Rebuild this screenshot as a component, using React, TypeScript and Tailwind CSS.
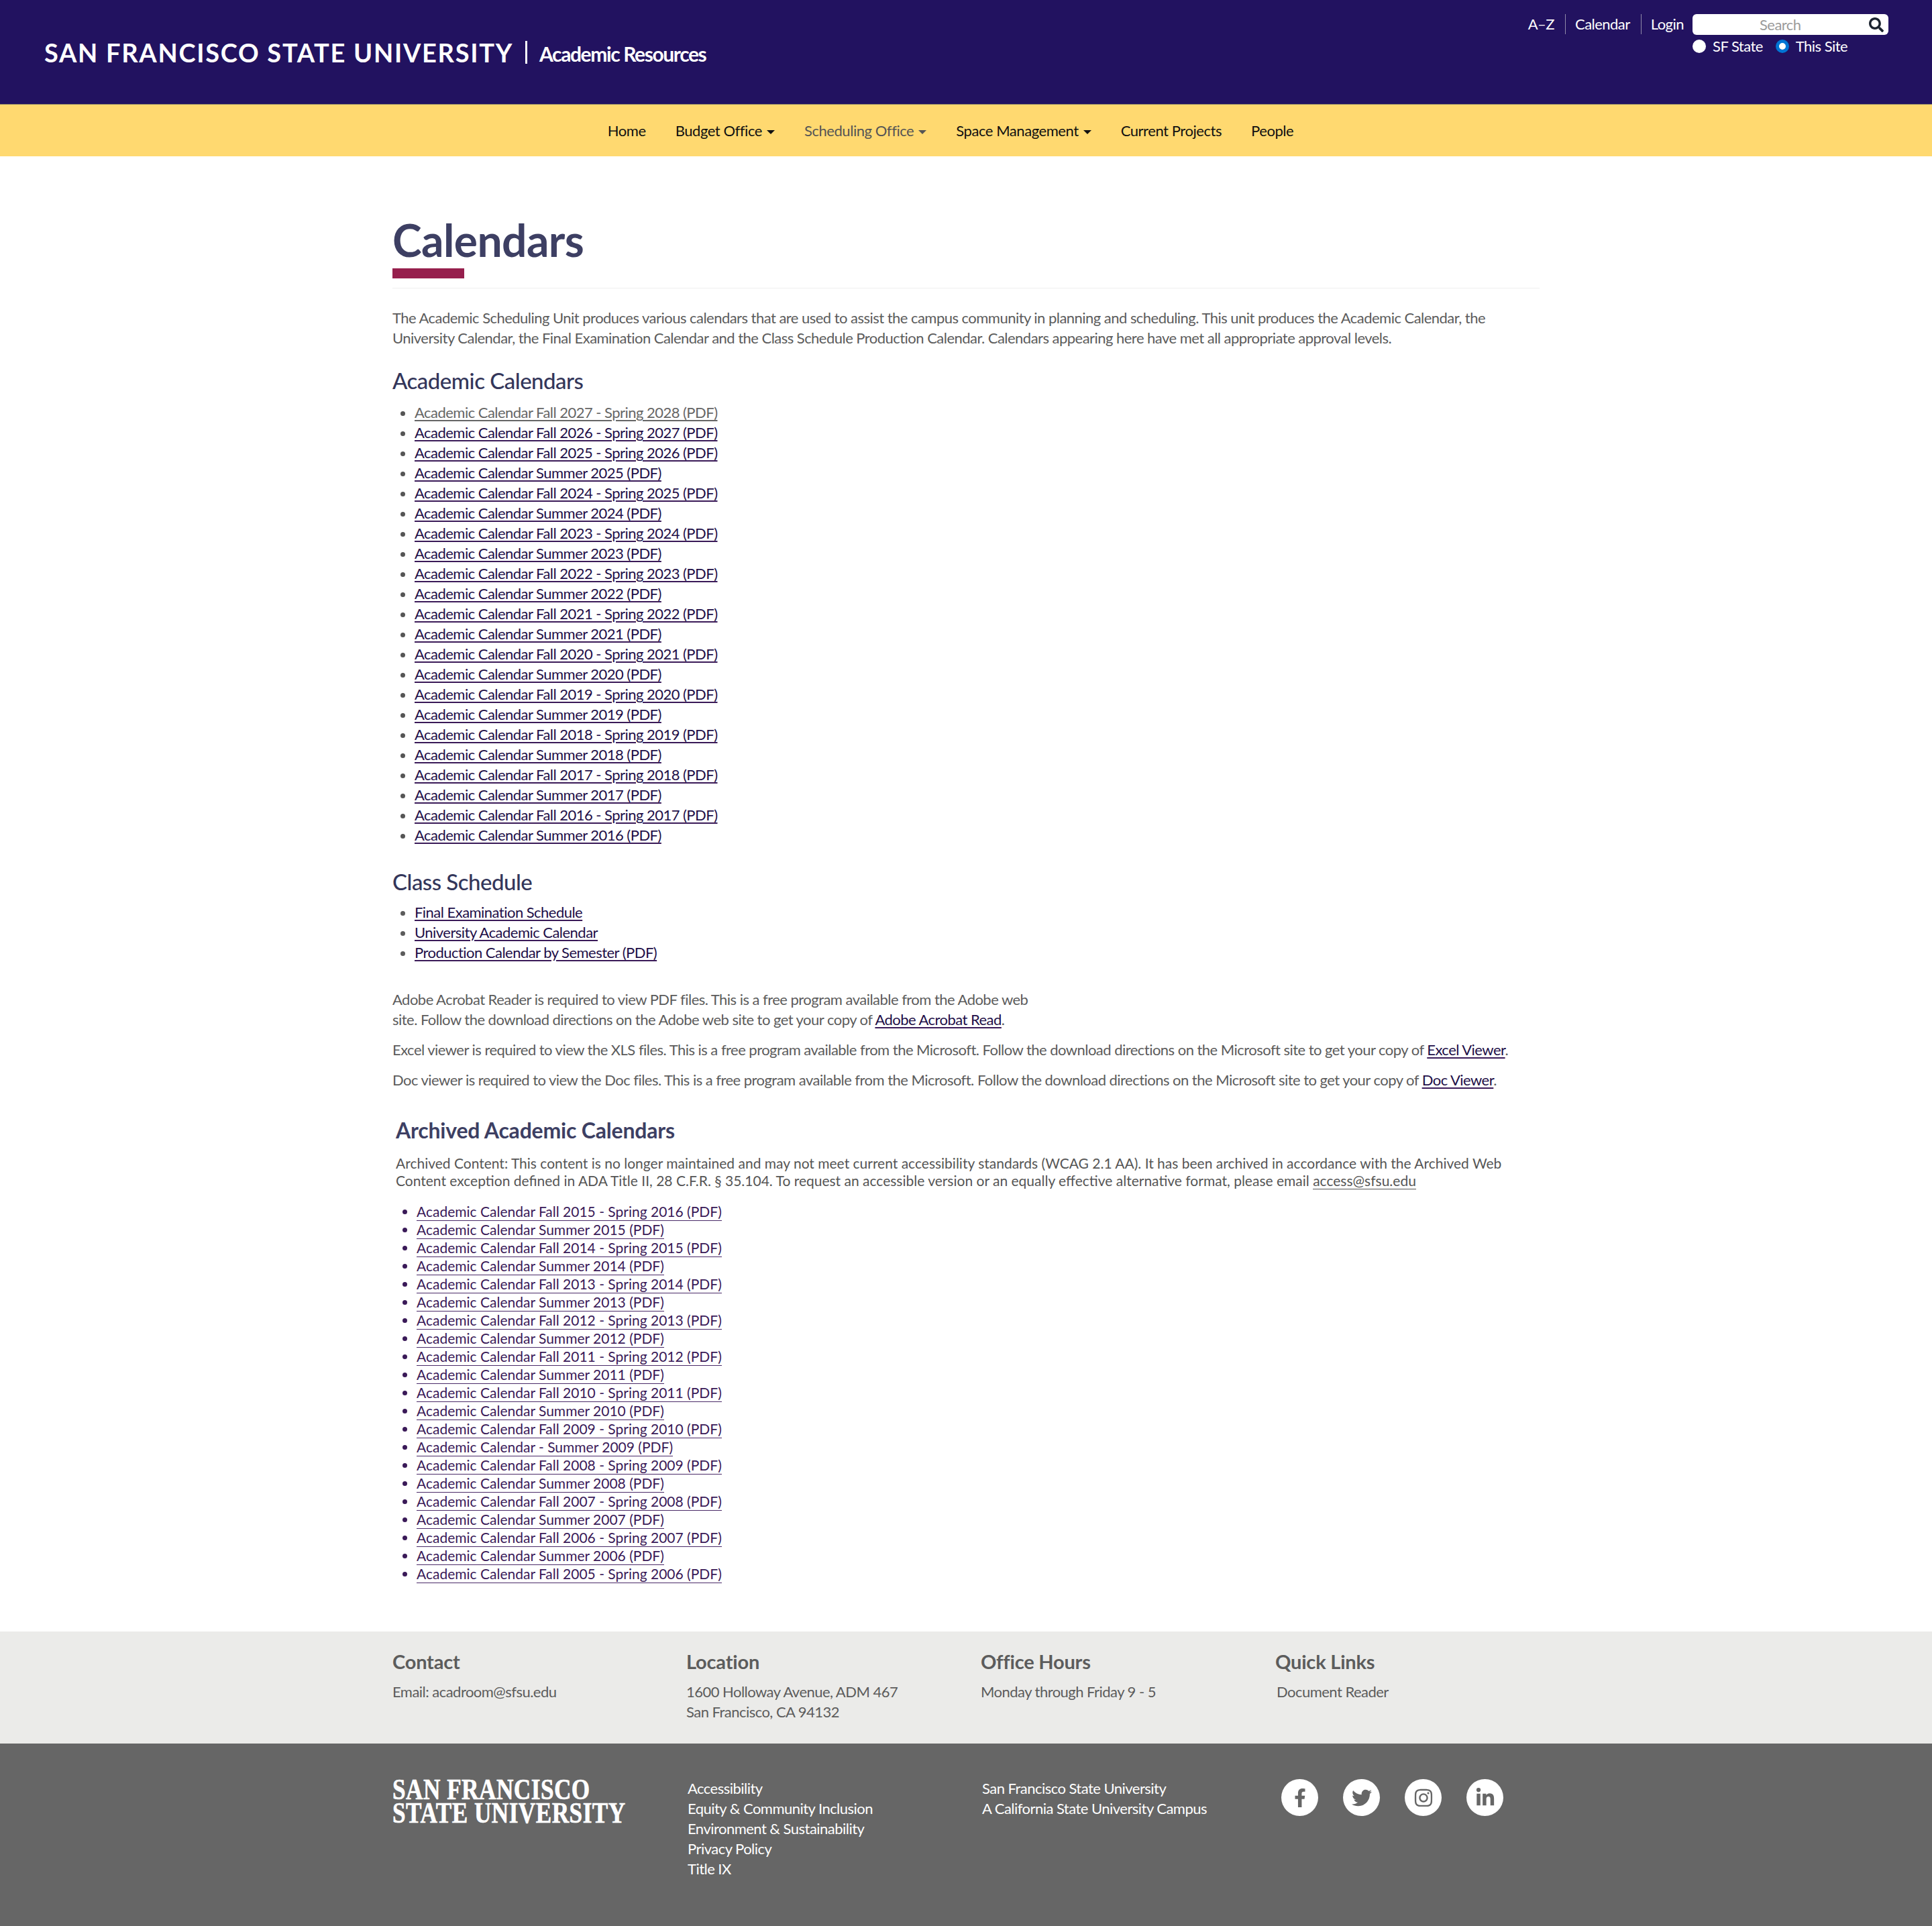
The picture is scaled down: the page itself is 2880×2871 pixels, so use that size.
import React from "react";
import { FaFacebookF, FaTwitter, FaInstagram, FaLinkedinIn, FaSearch } from "react-icons/fa";

const academic = [
  "Academic Calendar Fall 2026 - Spring 2027 (PDF)",
  "Academic Calendar Fall 2025 - Spring 2026 (PDF)",
  "Academic Calendar Summer 2025 (PDF)",
  "Academic Calendar Fall 2024 - Spring 2025 (PDF)",
  "Academic Calendar Summer 2024 (PDF)",
  "Academic Calendar Fall 2023 - Spring 2024 (PDF)",
  "Academic Calendar Summer 2023 (PDF)",
  "Academic Calendar Fall 2022 - Spring 2023 (PDF)",
  "Academic Calendar Summer 2022 (PDF)",
  "Academic Calendar Fall 2021 - Spring 2022 (PDF)",
  "Academic Calendar Summer 2021 (PDF)",
  "Academic Calendar Fall 2020 - Spring 2021 (PDF)",
  "Academic Calendar Summer 2020 (PDF)",
  "Academic Calendar Fall 2019 - Spring 2020 (PDF)",
  "Academic Calendar Summer 2019 (PDF)",
  "Academic Calendar Fall 2018 - Spring 2019 (PDF)",
  "Academic Calendar Summer 2018 (PDF)",
  "Academic Calendar Fall 2017 - Spring 2018 (PDF)",
  "Academic Calendar Summer 2017 (PDF)",
  "Academic Calendar Fall 2016 - Spring 2017 (PDF)",
  "Academic Calendar Summer 2016 (PDF)",
];
const archived = [
  "Academic Calendar Fall 2015 - Spring 2016 (PDF)",
  "Academic Calendar Summer 2015 (PDF)",
  "Academic Calendar Fall 2014 - Spring 2015 (PDF)",
  "Academic Calendar Summer 2014 (PDF)",
  "Academic Calendar Fall 2013 - Spring 2014 (PDF)",
  "Academic Calendar Summer 2013 (PDF)",
  "Academic Calendar Fall 2012 - Spring 2013 (PDF)",
  "Academic Calendar Summer 2012 (PDF)",
  "Academic Calendar Fall 2011 - Spring 2012 (PDF)",
  "Academic Calendar Summer 2011 (PDF)",
  "Academic Calendar Fall 2010 - Spring 2011 (PDF)",
  "Academic Calendar Summer 2010 (PDF)",
  "Academic Calendar Fall 2009 - Spring 2010 (PDF)",
  "Academic Calendar - Summer 2009 (PDF)",
  "Academic Calendar Fall 2008 - Spring 2009 (PDF)",
  "Academic Calendar Summer 2008 (PDF)",
  "Academic Calendar Fall 2007 - Spring 2008 (PDF)",
  "Academic Calendar Summer 2007 (PDF)",
  "Academic Calendar Fall 2006 - Spring 2007 (PDF)",
  "Academic Calendar Summer 2006 (PDF)",
  "Academic Calendar Fall 2005 - Spring 2006 (PDF)",
];

function L({ children, gray }: { children: React.ReactNode; gray?: boolean }) {
  return (
    <a href="#" className={"underline underline-offset-[3px] " + (gray ? "text-[#666666] decoration-[#666666]" : "text-[#220f48] decoration-[#3a1a58]")}>
      {children}
    </a>
  );
}

function Caret() {
  return <span className="inline-block ml-[7px] align-middle border-x-[6px] border-x-transparent border-t-[6px] border-t-current" />;
}

export default function App() {
  return (
    <div className="font-['Lato',sans-serif] text-[22px] leading-[30px] text-[#5c5c5c] tracking-[-0.53px] bg-white">
      <header className="h-[156px] bg-[#221260] border-b border-b-[#8d8264] flex justify-between text-white">
        <div className="flex items-center pl-[66px] h-[155px]">
          <span className="text-[38px] leading-[40px] font-bold tracking-[1.7px] uppercase">San Francisco State University</span>
          <span className="w-[3px] h-[34px] bg-white ml-[18px] mr-[18px]" />
          <span className="text-[30px] leading-[40px] font-bold tracking-[-1.4px] mt-[5px]">Academic Resources</span>
        </div>
        <div className="pr-[65px] pt-[21px] flex gap-[13px]">
          <div className="flex h-[30px] items-center">
            <a className="pr-[16px]">A–Z</a>
            <a className="pl-[14px] pr-[16px] border-l border-l-[#8f8aa8]">Calendar</a>
            <a className="pl-[14px] border-l border-l-[#8f8aa8]">Login</a>
          </div>
          <div className="w-[292px]">
            <div className="h-[31px] bg-white rounded-[6px] flex items-center justify-between pl-[100px] pr-[7px]">
              <span className="text-[#9b9b9b]">Search</span>
              <FaSearch className="text-[22px] text-[#1c2430]" />
            </div>
            <div className="flex items-center h-[34px]">
              <span className="w-[20px] h-[20px] rounded-full bg-white" />
              <span className="ml-[10px]">SF State</span>
              <span className="ml-[19px] w-[20px] h-[20px] rounded-full bg-white border-[5px] border-[#0075d4]" />
              <span className="ml-[10px]">This Site</span>
            </div>
          </div>
        </div>
      </header>
      <nav className="h-[77px] bg-[#ffd970] flex items-center justify-center gap-[44px] pr-[46px] text-[#111111] tracking-[-0.44px]">
        <a>Home</a>
        <a>Budget Office<Caret /></a>
        <a className="text-[#555555]">Scheduling Office<Caret /></a>
        <a>Space Management<Caret /></a>
        <a>Current Projects</a>
        <a>People</a>
      </nav>

      <main className="mx-auto w-[1710px] pt-[89px] h-[2199px]">
        <h1 className="text-[66px] leading-[72px] font-bold text-[#3d3f63] tracking-[-0.6px]">Calendars</h1>
        <div className="w-[107px] h-[15px] bg-[#961f4d] mt-[6px]" />
        <div className="h-[1px] bg-[#eeeeee] mt-[14px]" />
        <p className="mt-[29px]">
          The Academic Scheduling Unit produces various calendars that are used to assist the campus community in planning and scheduling. This unit produces the Academic Calendar, the University Calendar, the Final Examination Calendar and the Class Schedule Production Calendar. Calendars appearing here have met all appropriate approval levels.
        </p>
        <h2 className="mt-[30px] text-[33px] leading-[36px] font-medium text-[#33365a] tracking-[-0.5px]">Academic Calendars</h2>
        <ul className="mt-[15px] pl-[33px] list-disc marker:text-[#555555]">
          <li><L gray>Academic Calendar Fall 2027 - Spring 2028 (PDF)</L></li>
          {academic.map((t) => <li key={t}><L>{t}</L></li>)}
        </ul>
        <h2 className="mt-[36px] text-[33px] leading-[36px] font-medium text-[#33365a] tracking-[-0.5px]">Class Schedule</h2>
        <ul className="mt-[13px] pl-[33px] list-disc">
          <li><L>Final Examination Schedule</L></li>
          <li><L>University Academic Calendar</L></li>
          <li><L>Production Calendar by Semester (PDF)</L></li>
        </ul>
        <p className="mt-[40px] w-[960px]">
          Adobe Acrobat Reader is required to view PDF files. This is a free program available from the Adobe web site. Follow the download directions on the Adobe web site to get your copy of <L>Adobe Acrobat Read</L>.
        </p>
        <p className="mt-[15px]">
          Excel viewer is required to view the XLS files. This is a free program available from the Microsoft. Follow the download directions on the Microsoft site to get your copy of <L>Excel Viewer</L>.
        </p>
        <p className="mt-[15px]">
          Doc viewer is required to view the Doc files. This is a free program available from the Microsoft. Follow the download directions on the Microsoft site to get your copy of <L>Doc Viewer</L>.
        </p>
        <section className="pl-[5px] tracking-normal text-[21px]">
          <h2 className="mt-[42px] text-[32px] leading-[36px] font-bold text-[#3d3f63] tracking-[-0.2px]">Archived Academic Calendars</h2>
          <p className="mt-[18px] text-[#555555] leading-[26px]">
            Archived Content: This content is no longer maintained and may not meet current accessibility standards (WCAG 2.1 AA). It has been archived in accordance with the Archived Web Content exception defined in ADA Title II, 28 C.F.R. § 35.104. To request an accessible version or an equally effective alternative format, please email{" "}
            <a className="border-b border-b-[#555555]">access@sfsu.edu</a>
          </p>
          <ul className="mt-[19px] pl-[31px] list-disc marker:text-[#3a1a58] leading-[27px]">
            {archived.map((t) => (
              <li key={t}><a className="text-[#3a1a58] border-b border-b-[#4a2a68] pb-[1px]">{t}</a></li>
            ))}
          </ul>
        </section>
      </main>

      <section className="h-[167px] bg-[#ebebe9] pt-[25px]">
        <div className="mx-auto w-[1710px] grid grid-cols-[438px_439px_439px_1fr] text-[#5c5c5c]">
          <div>
            <h3 className="text-[29px] leading-[40px] font-bold tracking-[-0.2px]">Contact</h3>
            <p className="mt-[10px]">Email: acadroom@sfsu.edu</p>
          </div>
          <div>
            <h3 className="text-[29px] leading-[40px] font-bold tracking-[-0.2px]">Location</h3>
            <p className="mt-[10px]">1600 Holloway Avenue, ADM 467<br />San Francisco, CA 94132</p>
          </div>
          <div>
            <h3 className="text-[29px] leading-[40px] font-bold tracking-[-0.2px]">Office Hours</h3>
            <p className="mt-[10px]">Monday through Friday 9 - 5</p>
          </div>
          <div>
            <h3 className="text-[29px] leading-[40px] font-bold tracking-[-0.2px]">Quick Links</h3>
            <p className="mt-[10px] ml-[2px]">Document Reader</p>
          </div>
        </div>
      </section>

      <footer className="h-[272px] bg-[#666666] text-white pt-[53px]">
        <div className="mx-auto w-[1710px] grid grid-cols-[440px_439px_446px_1fr]">
          <div className="font-['Liberation_Serif',serif] font-bold text-[44px] leading-[35px] tracking-[0.6px] uppercase scale-x-[0.8] origin-left [-webkit-text-stroke:0.7px_white] whitespace-nowrap mt-[-2px]">
            San Francisco<br />State University
          </div>
          <ul className="mt-[-1px]">
            <li>Accessibility</li>
            <li>Equity &amp; Community Inclusion</li>
            <li>Environment &amp; Sustainability</li>
            <li>Privacy Policy</li>
            <li>Title IX</li>
          </ul>
          <div className="mt-[-1px]">San Francisco State University<br />A California State University Campus</div>
          <div className="flex gap-[37px] text-[#666666]">
            <a className="w-[55px] h-[55px] rounded-full bg-white flex items-center justify-center text-[28px]"><FaFacebookF /></a>
            <a className="w-[55px] h-[55px] rounded-full bg-white flex items-center justify-center text-[30px]"><FaTwitter /></a>
            <a className="w-[55px] h-[55px] rounded-full bg-white flex items-center justify-center text-[30px]"><FaInstagram /></a>
            <a className="w-[55px] h-[55px] rounded-full bg-white flex items-center justify-center text-[30px]"><FaLinkedinIn /></a>
          </div>
        </div>
      </footer>
    </div>
  );
}
